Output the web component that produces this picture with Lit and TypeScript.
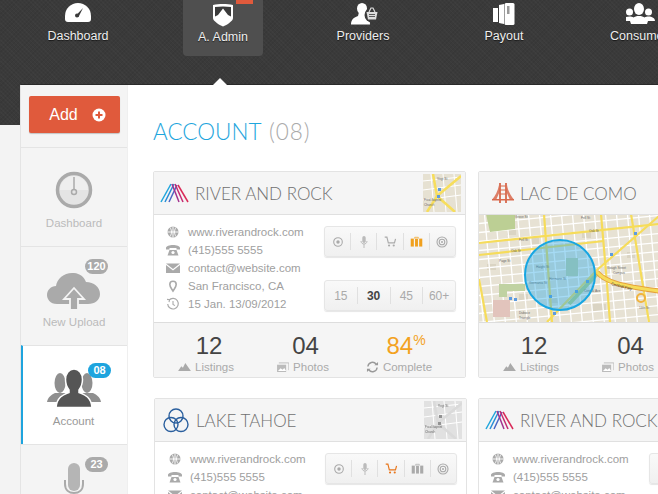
import { LitElement, html, css, svg } from 'lit';
import { customElement, property } from 'lit/decorators.js';

const G = '#aaa';

/* small icons */
const globe = svg`<svg width="16" height="14" viewBox="0 0 16 14"><circle cx="8" cy="7" r="5.5" fill="${G}"/><path d="M8 1.5v11M2.5 7h11M5 2.5c2 3 2 6 0 9M11 2.5c-2 3-2 6 0 9" stroke="#fff" stroke-width=".9" fill="none"/></svg>`;
const phone = svg`<svg width="16" height="14" viewBox="0 0 16 14"><path d="M1 5c0-4 14-4 14 0v1.5h-3.5V5h-7v1.5H1z" fill="${G}"/><path d="M4.5 7h7l2 5.5h-11z" fill="${G}"/><circle cx="8" cy="9.5" r="1.6" fill="#fff"/></svg>`;
const mail = svg`<svg width="16" height="14" viewBox="0 0 16 14"><path d="M1 2.5h14L8 8z" fill="${G}"/><path d="M1 4l7 5.4L15 4v8H1z" fill="${G}"/></svg>`;
const pin = svg`<svg width="16" height="14" viewBox="0 0 16 14"><path d="M8 12C6.500 9.500 4.800 7.800 4.800 5.500a3.200 3.200 0 0 1 6.400 0C11.200 7.800 9.500 9.500 8 12z" fill="none" stroke="${G}" stroke-width="1.600"/></svg>`;
const clock = svg`<svg width="16" height="14" viewBox="0 0 16 14"><path d="M4 3.200A5.300 5.300 0 1 1 2.700 7" fill="none" stroke="${G}" stroke-width="1.200"/><path d="M8 4v3.400l2 1.200M2 2.400l2.600.4-.6 2.400" fill="none" stroke="${G}" stroke-width="1.100"/></svg>`;

const target = svg`<svg width="14" height="14" viewBox="0 0 14 14"><circle cx="7" cy="7" r="4.300" fill="none" stroke="${G}" stroke-width="1.100"/><circle cx="7" cy="7" r="1.700" fill="${G}"/></svg>`;
const micSmall = svg`<svg width="10" height="14" viewBox="0 0 10 14"><rect x="3.300" y="1" width="3.400" height="7" rx="1.700" fill="#bbb"/><path d="M2 6c0 4 6 4 6 0M5 9v4" fill="none" stroke="#bbb" stroke-width="1"/></svg>`;
const cart = (c: string) => svg`<svg width="13" height="11" viewBox="0 0 18 15"><path d="M1 1.500h3l2 8h8.500l1.500-5.500" fill="none" stroke="${c}" stroke-width="1.600"/><circle cx="7" cy="13" r="1.500" fill="${c}"/><circle cx="13.500" cy="13" r="1.500" fill="${c}"/></svg>`;
const luggage = (c: string) => svg`<svg width="13" height="11" viewBox="0 0 18 14"><path d="M6.500 3V1.200h5V3" fill="none" stroke="${c}" stroke-width="1"/><rect x="1" y="3" width="4.300" height="11" fill="${c}"/><rect x="7" y="3" width="4" height="11" fill="${c}"/><rect x="12.700" y="3" width="4.300" height="11" fill="${c}"/></svg>`;
const rings = svg`<svg width="14" height="14" viewBox="0 0 14 14"><circle cx="7" cy="7" r="5" fill="none" stroke="${G}" stroke-width="1.100"/><circle cx="7" cy="7" r="2.800" fill="none" stroke="${G}" stroke-width="1.100"/><circle cx="7" cy="7" r="1" fill="${G}"/></svg>`;

const mountain = svg`<svg width="13" height="8" viewBox="0 0 16 10"><path d="M0 10l4-6 2 2 3-6 7 10z" fill="#aaa"/></svg>`;
const photo = svg`<svg width="13" height="10" viewBox="0 0 14 11"><path d="M1 3h10v8H1z" fill="#bbb"/><path d="M3 1h11v8" fill="none" stroke="#bbb" stroke-width="1"/><path d="M2 10l3-3 2 1.500 2-2 2 3.500z" fill="#fff"/></svg>`;
const refresh = svg`<svg width="13" height="12" viewBox="0 0 14 13"><path d="M2 6a5 5 0 0 1 9-2.500M12 7a5 5 0 0 1-9 2.500" fill="none" stroke="#999" stroke-width="1.500"/><path d="M9 4.500h4V1zM5 8.500H1V12z" fill="#999"/></svg>`;

/* header icons */
const navGauge = svg`<svg width="28" height="22" viewBox="0 0 28 22"><path d="M1 13a13 13 0 0 1 26 0v3q0 3-3 3H4q-3 0-3-3z" fill="#fff"/><path d="M12 12.500l7-7.500-4.500 9z" fill="#3b3b3b"/><circle cx="13" cy="12.500" r="2" fill="#3b3b3b"/></svg>`;
const navShield = svg`<svg width="24" height="24" viewBox="0 0 24 24"><path d="M2 2c6-1.300 14-1.300 20 0v13c0 3-6 7-10 8.500C8 22 2 18 2 15z" fill="#fff"/><path d="M4 4c5-.8 11-.8 16 0v9.500l-3-1.500-5-6.500L7 12l-3 1.500z" fill="#3b3b3b"/></svg>`;
const navProviders = svg`<svg width="30" height="22" viewBox="-3 0 30 22"><ellipse cx="11" cy="5.500" rx="5" ry="5.500" fill="#fff"/><path d="M8 9h6l1 4c3 1 4 3 4 8.500H0c0-4 2-7 7-8.500z" fill="#fff"/><circle cx="21" cy="12" r="7.500" fill="#3b3b3b"/><path d="M15.500 9h11l-1.500 7.500h-8z" fill="#ddd"/><path d="M18 9l2-4h2l2 4" fill="none" stroke="#ddd" stroke-width="1.200"/><path d="M18 11.500h6M18 13.500h6" stroke="#3b3b3b" stroke-width=".8"/></svg>`;
const navPayout = svg`<svg width="22" height="22" viewBox="0 0 22 22"><path d="M0 5h5v14H0z" fill="#fff"/><path d="M6 2l5-1v20l-5-1z" fill="#fff"/><rect x="11.500" y="0" width="10" height="22" rx="1.500" fill="#fff"/><rect x="14" y="3" width="2.500" height="8" fill="#999"/></svg>`;
const navConsumers = svg`<svg width="32" height="22" viewBox="3 0 32 22"><circle cx="6.500" cy="9" r="3.500" fill="#fff"/><circle cx="25.500" cy="9" r="3.500" fill="#fff"/><ellipse cx="16" cy="6" rx="5" ry="6" fill="#fff"/><path d="M0 18c0-3 3-4.500 6.500-4.500 1.500 0 3 .3 4 1 1-.8 3-1.500 5.500-1.500s4.500.7 5.500 1.500c1-.7 2.500-1 4-1C29 13.500 32 15 32 18h-7l-1 3H8l-1-3z" fill="#fff"/></svg>`;

/* sidebar icons */
const sideGauge = svg`<svg width="38" height="38" viewBox="0 0 38 38"><circle cx="19" cy="19" r="16.500" fill="#e4e4e4" stroke="#aaa" stroke-width="3.500"/><path d="M5 19a14 14 0 0 1 28 0z" fill="#eee"/><path d="M19 6v13" stroke="#aaa" stroke-width="1.500"/><circle cx="19" cy="21" r="2.500" fill="#e4e4e4" stroke="#aaa" stroke-width="1.500"/></svg>`;
const sideCloud = svg`<svg width="54" height="40" viewBox="0 0 54 40"><path d="M10 32C3 32 0 27 0 23c0-5 4-9 9-9 1-8 9-14 18-13 6 .6 10 4 12 9 8 0 14 5 14 12 0 6-5 10-12 10z" fill="#aaa"/><path d="M27 16L17 27h6v11h8V27h6z" fill="#aaa" stroke="#f4f4f4" stroke-width="1.800"/></svg>`;
const sideUsers = svg`<svg width="54" height="40" viewBox="0 0 54 40"><g fill="#8f8f8f"><ellipse cx="13" cy="14" rx="5.500" ry="10"/><path d="M0 33c1-5 4-7 8-9h10l6 9z"/><ellipse cx="40" cy="14" rx="5.500" ry="10"/><path d="M54 33c-1-5-4-7-8-9H36l-6 9z"/></g><g fill="#555" stroke="#fff" stroke-width="1.500"><path d="M27 0c5 0 8.500 4.500 8.500 10.500 0 5-2 8.500-3.500 10.500v2.500c5 2 12 4 13 15H9c1-11 8-13 13-15V21c-1.500-2-3.500-5.500-3.500-10.500C18.500 4.500 22 0 27 0z"/></g></svg>`;
const sideMic = svg`<svg width="20" height="40" viewBox="0 0 20 40"><rect x="4" y="1" width="12" height="28" rx="6" fill="#b5b5b5"/><path d="M1 18v4c0 6 4 9 9 9s9-3 9-9v-4" fill="none" stroke="#aaa" stroke-width="2"/></svg>`;

/* logos */
const riverLogo = svg`<svg width="30" height="20" viewBox="0 0 30 20"><g fill="none" stroke-width="1.500"><path d="M11 1L1 19" stroke="#1fa5dc"/><path d="M14 1L5 19" stroke="#2b8fd6"/><path d="M17 2L9 19" stroke="#4a67c4"/><path d="M12 1l7 18" stroke="#a2338f"/><path d="M15 1l8 18" stroke="#c42a72"/><path d="M18 2l10 17" stroke="#d92a58"/></g></svg>`;
const bridgeLogo = svg`<svg class="bridge" width="22" height="22" viewBox="0 0 22 22"><g stroke="#d8694d" fill="none"><path d="M8 1v20M14 1v20" stroke-width="1.800"/><path d="M8 4h6M8 8h6M8 12h6" stroke-width="1"/></g><path d="M7 3C6 9 3 14 .5 17h4L8 9zM15 3c1 6 4 11 6.500 14h-4L14 9z" fill="#d8694d" opacity=".85"/><path d="M0 17h22v1.500H0z" fill="#d8694d"/></svg>`;
const tahoeLogo = svg`<svg width="26" height="25" viewBox="0 0 26 25"><g fill="none" stroke="#2a5f9e" stroke-width="1.400"><circle cx="13" cy="8" r="7"/><circle cx="8" cy="16.500" r="7"/><circle cx="18" cy="16.500" r="7"/></g></svg>`;

function mapStreets() {
  const rows = Array.from({ length: 15 }, (_, i) => i * 9 - 8);
  const cols = Array.from({ length: 18 }, (_, i) => i * 11 - 6);
  return svg`
    ${rows.map(y => svg`<path d="M-5 ${y + 18}L185 ${y}" stroke="#fff" stroke-width="1.300"/>`)}
    ${cols.map(x => svg`<path d="M${x} -5L${x + 11} 115" stroke="#fff" stroke-width="1.300"/>`)}`;
}

const bigMap = svg`<svg class="big-map" width="313" height="107" viewBox="0 1 313 107" preserveAspectRatio="xMinYMin slice">
  <rect y="0" width="313" height="108" fill="#e7e2d4"/>
  <g fill="#dad4c3"><rect x="28" y="14" width="9" height="7"/><rect x="103" y="17" width="9" height="7"/><rect x="120" y="60" width="8" height="6"/><rect x="113" y="90" width="14" height="7"/><rect x="148" y="38" width="8" height="6"/><rect x="40" y="80" width="9" height="7"/><rect x="70" y="82" width="9" height="7"/><rect x="52" y="24" width="8" height="6"/><rect x="8" y="50" width="9" height="6"/></g>
  ${mapStreets()}
  <path d="M7 0h29v15l-25 3z" fill="#bccf94"/>
  <path d="M20 70h26v7H28v6h-8z" fill="#c0d2a2"/>
  <rect x="14" y="86" width="17" height="17" fill="#e2c4bc"/>
  <rect x="87" y="44" width="12" height="18" fill="#c6d0a8"/>
  <g fill="none" stroke="#f6dc5a" stroke-width="2.200">
    <path d="M0 29L180 10"/><path d="M0 41L125 27"/>
    <path d="M65 0l8 108"/><path d="M122 0l5 58 4 50"/><path d="M152 0l18 108"/>
    <path d="M0 65l8 43"/><path d="M68 108l50-52 62-54"/>
  </g>
  <path d="M90 90l28-30" stroke="#b4d083" stroke-width="4"/>
  <path d="M118 58c8 10 24 14 62 19" fill="none" stroke="#e6a23c" stroke-width="5"/>
  <path d="M118 58c8 10 24 14 62 19" fill="none" stroke="#f6dc5a" stroke-width="3"/>
  <circle cx="162" cy="84" r="4" fill="none" stroke="#f0b33e" stroke-width="2"/>
  <g fill="#5d9be0"><rect x="30" y="83" width="3" height="3"/><rect x="35" y="84" width="3" height="3"/><rect x="131" y="39" width="3" height="3"/><rect x="155" y="18" width="3" height="3"/><rect x="96" y="76" width="3" height="3"/><rect x="107" y="66" width="3" height="3"/><rect x="70" y="81" width="3" height="3"/><rect x="74" y="98" width="3" height="3"/></g>
  <g class="map-label">
    <text x="36" y="4">Grove St</text><text x="40" y="27">Fell St</text><text x="32" y="38">Oak St</text>
    <text x="20" y="48">Page St</text><text x="57" y="54">Haight St</text><text x="50" y="70">Germania St</text>
    <text x="102" y="5">Fell St</text><text x="110" y="18">Oak St</text><text x="128" y="55">Gough Street</text>
    <text x="134" y="60">Campus</text><text x="105" y="78">Central Ave</text><text x="40" y="100">Duboce</text>
    <text x="40" y="105">Triangle</text><text x="160" y="95">14th St</text><text x="70" y="66">Hermann St</text>
  </g>
  <text class="map-label map-road" x="132" y="71" transform="rotate(14 132 71)">Central Fwy</text>
  <circle cx="81" cy="61" r="35" fill="#2aa9e6" fill-opacity=".42" stroke="#18a6e2" stroke-width="2"/>
</svg>`;

const thumbMap = svg`<svg width="38" height="38" viewBox="0 0 38 38">
  <rect width="38" height="38" fill="#e6e1d2"/>
  <g stroke="#fff" stroke-width="1"><path d="M0 7L38 3M0 16L38 11M0 26L38 21M8 0l3 38M20 0l3 38M31 0l3 38"/></g>
  <g fill="none" stroke="#f7de5c" stroke-width="2.500"><path d="M10 0l4 22 18 16"/><path d="M38 2L14 22 4 38"/></g>
  <rect x="15" y="14" width="3" height="3" fill="#5d9be0"/><rect x="14" y="21" width="3" height="3" fill="#5d9be0"/>
  <g class="map-label"><text x="14" y="6">Vogt St</text><text x="1" y="27">Fred Baptist</text><text x="1" y="32">Church</text></g>
</svg>`;

interface Place {
  name: string;
  logo: unknown;
  shape: 'thumb' | 'thumb-gray' | 'map';
  active: 'bag' | 'cart';
  nudge?: boolean;
}

const places: Place[] = [
  { name: 'RIVER AND ROCK', logo: riverLogo, shape: 'thumb', active: 'bag' },
  { name: 'LAC DE COMO', logo: bridgeLogo, shape: 'map', active: 'bag' },
  { name: 'LAKE TAHOE', logo: tahoeLogo, shape: 'thumb-gray', active: 'cart', nudge: true },
  { name: 'RIVER AND ROCK', logo: riverLogo, shape: 'thumb', active: 'bag' },
];

@customElement('place-card')
export class PlaceCard extends LitElement {
  @property({ type: Object }) place!: Place;

  static styles = css`
    :host {
      display: block;
      width: 313px;
      flex: none;
      color: #999;
    }
    :host(.nudge) {
      margin-left: 1px;
    }
    .card {
      border: 1px solid #e3e3e3;
      border-radius: 2px;
      background: #fff;
    }
    .head {
      height: 42px;
      display: flex;
      align-items: center;
      padding: 0 4px 0 6px;
      background: #f5f5f5;
      border-bottom: 1px solid #e0e0e0;
    }
    .logo {
      width: 30px;
      height: 25px;
      display: flex;
      align-items: center;
      justify-content: center;
      margin-right: 5px;
    }
    .bridge {
      margin-left: 4px;
      margin-right: -2px;
    }
    .title {
      flex: 1;
      font: 300 17px Lato, 'Open Sans', sans-serif;
      color: #707070;
      white-space: nowrap;
    }
    .thumb {
      display: block;
      width: 38px;
      height: 38px;
    }
    .thumb.gray {
      filter: grayscale(1);
    }
    .map-label {
      font: 3.200px 'Liberation Sans', sans-serif;
      fill: #666;
    }
    .map-road {
      font-size: 4px;
      fill: #333;
    }
    .big-map {
      display: block;
    }
    .body {
      height: 107px;
      box-sizing: border-box;
      display: flex;
      justify-content: space-between;
      padding: 8px 9px 0 11px;
    }
    .nudge .body {
      padding-left: 12px;
    }
    .rows {
      display: flex;
      flex-direction: column;
    }
    .row {
      height: 18px;
      display: flex;
      align-items: center;
      gap: 7px;
      font: 11.500px 'Liberation Sans', sans-serif;
      color: #a0a0a0;
      white-space: nowrap;
    }
    .row svg {
      display: block;
      flex: none;
    }
    .tools {
      display: flex;
      flex-direction: column;
      gap: 23px;
      padding-top: 3px;
    }
    .bar {
      width: 132px;
      height: 31px;
      box-sizing: border-box;
      display: flex;
      align-items: center;
      border: 1px solid #e6e6e6;
      border-radius: 3px;
      background: linear-gradient(#f9f9f9, #f0f0f0);
      box-shadow: 0 1px 1px rgba(0, 0, 0, 0.1);
    }
    .cell {
      flex: 1;
      height: 17px;
      display: flex;
      align-items: center;
      justify-content: center;
      border-right: 1px solid #e0e0e0;
      font: 12px 'Liberation Sans', sans-serif;
      color: #aaa;
    }
    .cell:last-child {
      border-right: 0;
    }
    .cell.on {
      font-weight: bold;
      color: #444;
    }
    .stats {
      height: 54px;
      display: grid;
      grid-template-columns: 98px 95px 106px;
      padding-left: 6px;
      background: #f5f5f5;
      border-top: 1px solid #ddd;
    }
    .stat {
      display: flex;
      flex-direction: column;
      align-items: center;
      padding-top: 9px;
    }
    .num {
      font: 24px/27px 'Liberation Sans', sans-serif;
      color: #444;
    }
    .num.hot {
      color: #f3a21f;
    }
    .num sup {
      font-size: 14px;
      line-height: 0;
      vertical-align: 9px;
    }
    .lbl {
      display: flex;
      align-items: center;
      gap: 4px;
      margin-right: 6px;
      font: 11.500px/16px 'Liberation Sans', sans-serif;
      color: #aaa;
    }
    .stat:last-child .lbl {
      margin-right: 14px;
    }
  `;

  render() {
    const p = this.place;
    return html`
      <div class="card ${p.nudge ? 'nudge' : ''}">
        <div class="head">
          <span class="logo">${p.logo}</span>
          <span class="title">${p.name}</span>
          ${p.shape === 'map'
            ? ''
            : html`<span class="thumb ${p.shape === 'thumb-gray' ? 'gray' : ''}">${thumbMap}</span>`}
        </div>
        ${p.shape === 'map'
          ? bigMap
          : html`<div class="body">
              <div class="rows">
                <div class="row">${globe}www.riverandrock.com</div>
                <div class="row">${phone}(415)555 5555</div>
                <div class="row">${mail}contact@website.com</div>
                <div class="row">${pin}San Francisco, CA</div>
                <div class="row">${clock}15 Jan. 13/09/2012</div>
              </div>
              <div class="tools">
                <div class="bar">
                  <span class="cell">${target}</span>
                  <span class="cell">${micSmall}</span>
                  <span class="cell">${cart(p.active === 'cart' ? '#e8751a' : G)}</span>
                  <span class="cell">${luggage(p.active === 'bag' ? '#f0a01e' : G)}</span>
                  <span class="cell">${rings}</span>
                </div>
                <div class="bar">
                  <span class="cell">15</span>
                  <span class="cell on">30</span>
                  <span class="cell">45</span>
                  <span class="cell">60+</span>
                </div>
              </div>
            </div>`}
        <div class="stats">
          <div class="stat"><span class="num">12</span><span class="lbl">${mountain}Listings</span></div>
          <div class="stat"><span class="num">04</span><span class="lbl">${photo}Photos</span></div>
          <div class="stat">
            <span class="num hot">84<sup>%</sup></span>
            <span class="lbl">${refresh}Complete</span>
          </div>
        </div>
      </div>
    `;
  }
}

@customElement('app-root')
export class AppRoot extends LitElement {
  static styles = css`
    :host {
      display: block;
      width: 658px;
      height: 494px;
      overflow: hidden;
      background: #f3f3f3;
      font-family: 'Liberation Sans', Arial, sans-serif;
    }
    .top {
      height: 125px;
      background-color: #3a3a3a;
      background-image:
        repeating-linear-gradient(45deg, rgba(255, 255, 255, 0.018) 0 1px, transparent 1px 3px),
        repeating-linear-gradient(-45deg, rgba(0, 0, 0, 0.06) 0 1px, transparent 1px 3px);
    }
    .nav {
      display: flex;
      gap: 61px;
      padding-left: 38px;
      white-space: nowrap;
    }
    .nav-item {
      width: 80px;
      height: 56px;
      flex: none;
      box-sizing: border-box;
      display: flex;
      flex-direction: column;
      align-items: center;
      padding-top: 3px;
      font-size: 12.500px;
      line-height: 16px;
      color: #eee;
      text-shadow: 0 1px 1px rgba(0, 0, 0, 0.6);
    }
    .nav-item:last-child {
      margin-left: -3px;
    }
    .nav-icon {
      position: relative;
      height: 22px;
      margin-bottom: 3px;
    }
    .nav-icon svg {
      display: block;
    }
    .nav-item.on {
      margin-left: 4px;
      margin-right: -1px;
      background: #4f4f4f;
      border-radius: 0 0 4px 4px;
    }
    .nav-item.on .nav-icon {
      margin-bottom: 4px;
    }
    .alert {
      position: absolute;
      top: -3px;
      left: 25px;
      width: 17px;
      height: 4px;
      background: #e05a3c;
    }
    .panel {
      position: relative;
      display: flex;
      width: 800px;
      height: 409px;
      margin: -40px 0 0 21px;
      background: #fff;
      box-shadow: -1px 0 0 #e4e4e4, 0 -1px 0 #2a2a2a;
    }
    .panel::before {
      content: '';
      position: absolute;
      top: -7px;
      left: 192px;
      border: 7px solid transparent;
      border-top: 0;
      border-bottom-color: #fff;
    }
    .side {
      width: 107px;
      flex: none;
      background: #f4f4f4;
      border-right: 1px solid #efefef;
      box-sizing: border-box;
    }
    .add-wrap {
      padding: 11px 8px 14px;
    }
    .add {
      height: 37px;
      width: 91px;
      box-sizing: border-box;
      padding-left: 6px;
      display: flex;
      align-items: center;
      justify-content: center;
      gap: 14px;
      border-radius: 2px;
      background: #e05a3c;
      box-shadow: 0 1px 1px rgba(0, 0, 0, 0.2);
      color: #fff;
      font-size: 16px;
    }
    .add svg {
      display: block;
    }
    .item {
      position: relative;
      height: 99px;
      box-sizing: border-box;
      display: flex;
      flex-direction: column;
      align-items: center;
      padding-top: 23px;
      border-top: 1px solid #e4e4e4;
      color: #bbb;
      font-size: 11.500px;
      line-height: 16px;
    }
    .slot {
      height: 40px;
      margin-bottom: 4px;
    }
    .slot svg {
      display: block;
    }
    .item.up .slot {
      padding-top: 2px;
      height: 38px;
    }
    .item.mic .slot {
      margin-top: -6px;
    }
    .item.on {
      background: #fff;
      border-left: 2px solid #1ea4de;
      color: #999;
      padding-right: 3px;
    }
    .badge {
      position: absolute;
      top: 12px;
      right: 19px;
      height: 15px;
      min-width: 23px;
      padding: 0 2px;
      box-sizing: border-box;
      border-radius: 8px;
      background: #aaa;
      color: #fff;
      font-size: 11px;
      font-weight: bold;
      line-height: 15px;
      text-align: center;
    }
    .item.on .badge {
      top: 17px;
      right: 16px;
      background: #1ea4de;
    }
    .main {
      flex: 1;
      padding: 32px 0 0 25px;
    }
    h1 {
      margin: 0 0 24px;
      font: 300 22.500px/30px Lato, 'Open Sans', sans-serif;
      color: #1fa6dd;
    }
    h1 span {
      margin-left: 2px;
      letter-spacing: 1px;
      color: #aaa;
    }
    .cards {
      display: grid;
      grid-template-columns: 313px 313px;
      column-gap: 12px;
      row-gap: 20px;
    }
  `;

  render() {
    return html`
      <div class="top">
        <div class="nav">
          <div class="nav-item"><span class="nav-icon">${navGauge}</span>Dashboard</div>
          <div class="nav-item on">
            <span class="nav-icon">${navShield}<i class="alert"></i></span>A. Admin
          </div>
          <div class="nav-item"><span class="nav-icon">${navProviders}</span>Providers</div>
          <div class="nav-item"><span class="nav-icon">${navPayout}</span>Payout</div>
          <div class="nav-item"><span class="nav-icon">${navConsumers}</span>Consumers</div>
        </div>
      </div>
      <div class="panel">
        <div class="side">
          <div class="add-wrap">
            <div class="add">
              Add
              <svg width="14" height="14" viewBox="0 0 14 14"><circle cx="7" cy="7" r="6.500" fill="#fff"/><path d="M7 3.500v7M3.500 7h7" stroke="#e05a3c" stroke-width="2"/></svg>
            </div>
          </div>
          <div class="item"><span class="slot">${sideGauge}</span>Dashboard</div>
          <div class="item up"><span class="slot">${sideCloud}</span>New Upload<span class="badge">120</span></div>
          <div class="item on"><span class="slot">${sideUsers}</span>Account<span class="badge">08</span></div>
          <div class="item mic"><span class="slot">${sideMic}</span><span class="badge">23</span></div>
        </div>
        <div class="main">
          <h1>ACCOUNT <span>(08)</span></h1>
          <div class="cards">
            ${places.map(p => html`<place-card class=${p.nudge ? 'nudge' : ''} .place=${p}></place-card>`)}
          </div>
        </div>
      </div>
    `;
  }
}
